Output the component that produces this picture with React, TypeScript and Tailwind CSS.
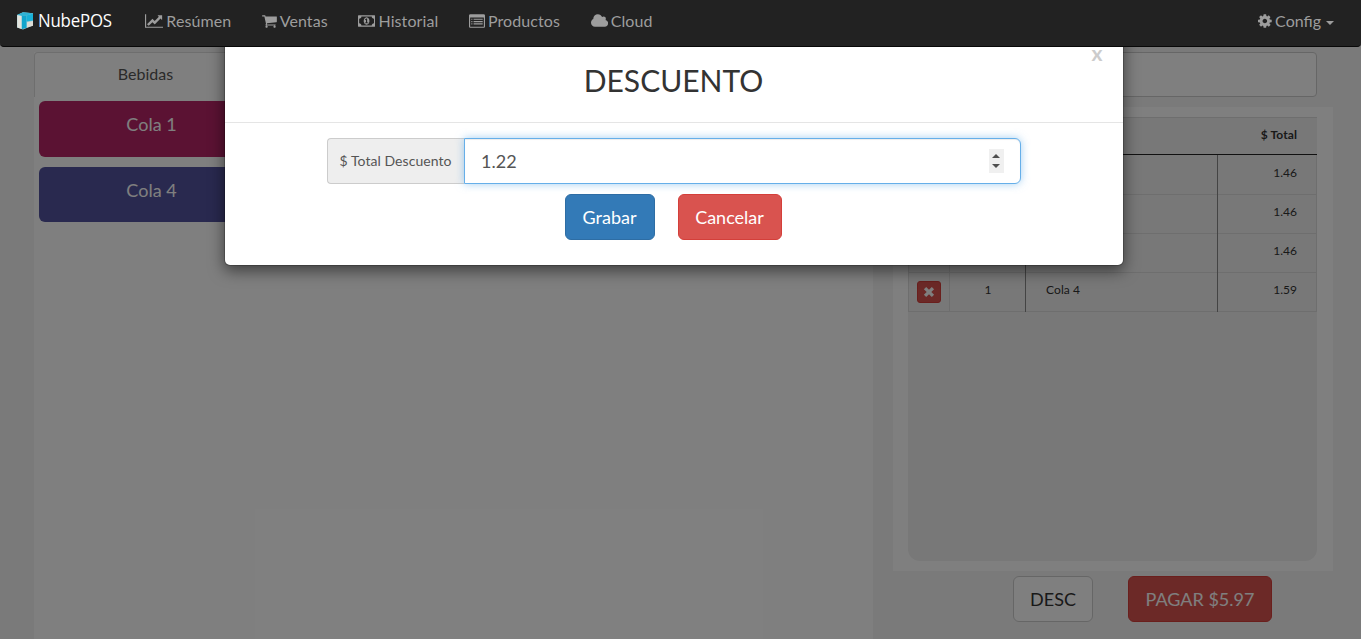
import React from "react";

type IconProps = { w: number; children: React.ReactNode };

const Icon = ({ w, children }: IconProps) => (
  <svg viewBox={`0 0 ${w} 1792`} width={(w * 16) / 1792} height={16} fill="currentColor" className="shrink-0">
    {children}
  </svg>
);

const ChartIcon = () => (
  <Icon w={2048}>
    <path d="M2048 1536v128h-2048v-1536h128v1408h1920zm-128-1248v435q0 21-19.5 29.5t-35.5-7.5l-121-121-633 633q-10 10-23 10t-23-10l-233-233-416 416-192-192 585-585q10-10 23-10t23 10l233 233 464-464-121-121q-16-16-7.5-35.5t29.5-19.5h435q14 0 23 9t9 23z" />
  </Icon>
);

const CartIcon = () => (
  <Icon w={1664}>
    <path transform="translate(-64 0)" d="M704 1536q0 52-38 90t-90 38-90-38-38-90 38-90 90-38 90 38 38 90zm896 0q0 52-38 90t-90 38-90-38-38-90 38-90 90-38 90 38 38 90zm128-1088v512q0 24-16.5 42.5t-40.5 21.5l-1044 122q13 60 13 70 0 16-24 64h920q26 0 45 19t19 45-19 45-45 19h-1024q-26 0-45-19t-19-45q0-11 8-31.5t16-36 21.5-40 15.5-29.5l-177-823h-204q-26 0-45-19t-19-45 19-45 45-19h256q16 0 28.5 6.5t19.5 15.5 13 24.5 8 26 5.5 29.5 4.5 26h1201q26 0 45 19t19 45z" />
  </Icon>
);

const MoneyIcon = () => (
  <Icon w={1920}>
    <path d="M768 1152h384v-96h-128v-448h-114l-148 137 77 80q42-37 55-57h2v288h-128v96zm512-256q0 70-21 142t-59.5 134-101.5 101-138 39-138-39-101.5-101-59.5-134-21-142 21-142 59.5-134 101.5-101 138-39 138 39 101.5 101 59.5 134 21 142zm512 256v-512q-106 0-181-75t-75-181h-1152q0 106-75 181t-181 75v512q106 0 181 75t75 181h1152q0-106 75-181t181-75zm128-832v1152q0 26-19 45t-45 19h-1792q-26 0-45-19t-19-45v-1152q0-26 19-45t45-19h1792q26 0 45 19t19 45z" />
  </Icon>
);

const ListIcon = () => (
  <Icon w={1792}>
    <path
      fillRule="evenodd"
      d="M160 128h1472q66 0 113 47t47 113v1216q0 66-47 113t-113 47h-1472q-66 0-113-47t-47-113v-1216q0-66 47-113t113-47zM160 512q-32 0-32 32v960q0 32 32 32h1472q32 0 32-32v-960q0-32-32-32z"
    />
    <path d="M256 640h128v128h-128zM512 640h1024v128h-1024zM256 896h128v128h-128zM512 896h1024v128h-1024zM256 1152h128v128h-128zM512 1152h1024v128h-1024z" />
  </Icon>
);

const CloudIcon = () => (
  <Icon w={1920}>
    <path d="M1920 1152q0 159-112.5 271.5t-271.5 112.5h-1088q-185 0-316.5-131.5t-131.5-316.5q0-132 71-241.5t187-163.5q-2-28-2-43 0-212 150-362t362-150q158 0 286.5 88t187.5 230q70-62 166-62 106 0 181 75t75 181q0 75-41 138 129 30 213 134.5t84 239.5z" />
  </Icon>
);

const GearIcon = () => (
  <Icon w={1536}>
    <path transform="translate(-128 0)" d="M1152 896q0-106-75-181t-181-75-181 75-75 181 75 181 181 75 181-75 75-181zm512-109v222q0 12-8 23t-20 13l-185 28q-19 54-39 91 35 50 107 138 10 12 10 25t-9 23q-27 37-99 108t-94 71q-12 0-26-9l-138-108q-44 23-91 38-16 136-29 186-7 28-36 28h-222q-14 0-24.5-8.5t-11.5-21.5l-28-184q-49-16-90-37l-141 107q-10 9-25 9-14 0-25-11-126-114-165-168-7-10-7-23 0-12 8-23 15-21 51-66.5t54-70.5q-27-50-41-99l-183-27q-13-2-21-12.5t-8-23.5v-222q0-12 8-23t19-13l186-28q14-46 39-92-40-57-107-138-10-12-10-24 0-10 9-23 26-36 98.5-107.5t94.5-71.5q13 0 26 10l138 107q44-23 91-38 16-136 29-186 7-28 36-28h222q14 0 24.5 8.5t11.5 21.5l28 184q49 16 90 37l142-107q9-9 24-9 13 0 25 10 129 119 165 170 7 8 7 22 0 12-8 23-15 21-51 66.5t-54 70.5q26 50 41 98l183 28q13 2 21 12.5t8 23.5z" />
  </Icon>
);

const CubeLogo = () => (
  <svg width="17" height="18" viewBox="0 0 17 18" className="shrink-0">
    <path d="M0 3L6 0.3L16 1.2V13.5L6 17.5L0 15.5Z" fill="#9ccbd6" />
    <path d="M0 3L6 0.3L16 1.2L10 3.6L5 4Z" fill="#2fb3d4" />
    <path d="M0.3 3.2L4.8 4V17L0.3 15.5Z" fill="#e4e4dd" />
    <path d="M4.8 4L9.5 3.5V15.8L4.8 17.2Z" fill="#12a5cc" />
    <path d="M9.5 3.5L16 1.5V8.5L9.5 9.6Z" fill="#18b1d8" />
    <path d="M10 10.2L16 9V13.8L10 15.6Z" fill="#dcdcd5" />
  </svg>
);

const NAV = [
  { label: "Resúmen", icon: <ChartIcon /> },
  { label: "Ventas", icon: <CartIcon /> },
  { label: "Historial", icon: <MoneyIcon /> },
  { label: "Productos", icon: <ListIcon /> },
  { label: "Cloud", icon: <CloudIcon /> },
];

const ROWS = [
  { qty: 1, name: "Cola 1", total: "1.46" },
  { qty: 1, name: "Cola 1", total: "1.46" },
  { qty: 1, name: "Cola 1", total: "1.46" },
  { qty: 1, name: "Cola 4", total: "1.59" },
];

function Navbar() {
  return (
    <header className="relative z-20 flex h-[47px] items-start rounded-b border-b border-[#080808] bg-[#222] pl-[17px] pr-[27px] text-[#9d9d9d]">
      <div className="mt-3 flex w-[98px] items-start gap-1">
        <CubeLogo />
        <span className="-mt-[4px] origin-left scale-x-[0.935] font-['Open_Sans',sans-serif] text-[18px] leading-[25px] tracking-[-0.2px] text-white">NubePOS</span>
      </div>
      <nav className="ml-[30px] flex gap-[30.5px] tracking-[0.1px]">
        {NAV.map((n) => (
          <a key={n.label} className="flex h-[42px] items-center gap-[3px]">
            {n.icon}
            <span className="-mt-px">{n.label}</span>
          </a>
        ))}
      </nav>
      <a className="ml-auto flex h-[42px] items-center gap-[3px]">
        <GearIcon />
        <span className="-mt-px">Config</span>
        <span className="ml-[2px] mt-1 border-x-4 border-t-4 border-x-transparent border-t-[#9d9d9d]" />
      </a>
    </header>
  );
}

function Catalog() {
  return (
    <section className="ml-[34px] mt-[5px] w-[839px] bg-white">
      <div className="flex h-[45px] w-[223px] items-center justify-center rounded-t border border-b-0 border-[#ddd] pb-[2px] text-[#555]">
        Bebidas
      </div>
      <div className="flex flex-col gap-[10px] px-[5px] pt-1 text-lg text-white">
        <div className="h-[56px] w-[225px] rounded-md bg-[#b62466] pt-[9px] text-center">Cola 1</div>
        <div className="h-[55px] w-[225px] rounded-md bg-[#52529e] pt-[9px] text-center">Cola 4</div>
      </div>
    </section>
  );
}

function Ticket() {
  return (
    <section className="ml-5 mt-[5px] w-[440px]">
      <div className="ml-[15px] h-[45px] w-[409px] rounded border border-[#ccc] bg-white" />
      <div className="mt-[10px] h-[464px] bg-white pl-[15px] pr-4 pt-[10px]">
        <div className="h-[444px] overflow-hidden rounded-b-xl bg-[#f0f0f0] text-xs text-[#333]">
          <div className="flex h-[38px] items-center justify-end border-b border-t border-b-[#222] border-t-[#ddd] pb-[2px] pr-5 font-bold tracking-[0.1px]">
            $ Total
          </div>
          {ROWS.map((r, i) => (
            <div key={i} className={i === 0 ? "flex h-10 border-b border-r border-[#ddd] leading-[18px]" : "flex h-[39px] border-b border-r border-[#ddd] leading-4"}>
              <div className="flex w-[42px] items-center justify-center border-x border-[#ddd]">
                <span className="flex h-[22px] w-6 items-center justify-center rounded-[3px] border border-[#d43f3a] bg-[#d9534f] text-white">
                  <svg width="12" height="12" viewBox="0 0 12 12">
                    <path d="M3.2 .9L6 3.7L8.8 .9L11.1 3.2L8.3 6L11.1 8.8L8.8 11.1L6 8.3L3.2 11.1L.9 8.8L3.7 6L.9 3.2Z" fill="currentColor" />
                  </svg>
                </span>
              </div>
              <div className="-mb-px w-[76px] border-r border-[#888] pl-px pt-[9px] text-center">{r.qty}</div>
              <div className="-mb-px w-[192px] border-r border-[#888] pl-5 pt-[9px] tracking-[0.1px]">{r.name}</div>
              <div className="flex-1 pr-[19px] pt-[9px] text-right">{r.total}</div>
            </div>
          ))}
        </div>
      </div>
      <div className="mt-[5px] flex gap-[35px] pl-[120px] text-lg">
        <button className="h-[46px] w-[80px] rounded-md border border-[#ccc] bg-white text-[#333]">DESC</button>
        <button className="h-[46px] w-[144px] rounded-md border border-[#d43f3a] bg-[#d9534f] text-white">PAGAR $5.97</button>
      </div>
    </section>
  );
}

function DiscountDialog() {
  return (
    <div className="absolute left-[224px] top-[30px] z-10 h-[236px] w-[900px] rounded-md border border-black/20 bg-white bg-clip-padding shadow-[0_5px_15px_rgba(0,0,0,0.5)]">
      <span className="absolute right-[20.5px] top-[11px] text-[21px] font-bold leading-[21px] text-[#ccc]">x</span>
      <div className="flex h-[92px] items-end justify-center border-b border-[#e5e5e5] pb-[24px] pr-px">
        <h4 className="text-[30px] leading-[36px] text-[#333]">DESCUENTO</h4>
      </div>
      <div className="flex justify-center pt-[15px]">
        <label className="flex h-[46px] w-[137px] items-center rounded-l border border-r-0 border-[#ccc] bg-[#eee] pl-[11.5px] text-sm tracking-[0.06px] text-[#555]">
          $ Total Descuento
        </label>
        <div className="flex h-[46px] w-[557px] items-center justify-between rounded-r-md border border-[#66afe9] bg-white pl-4 pr-4 text-lg text-[#555] shadow-[inset_0_1px_1px_rgba(0,0,0,0.075),0_0_8px_rgba(102,175,233,0.6)]">
          <span>1.22</span>
          <span className="flex h-6 w-[15px] flex-col items-start justify-between bg-[#f0f0f0] py-[5px] pl-[3px]">
            <span className="border-x-4 border-b-4 border-x-transparent border-b-[#505050]" />
            <span className="border-x-4 border-t-4 border-x-transparent border-t-[#505050]" />
          </span>
        </div>
      </div>
      <div className="mt-[10px] flex justify-center gap-[23px] pr-[2px] text-lg text-white">
        <button className="h-[46px] w-[90px] rounded-md border border-[#2e6da4] bg-[#337ab7]">Grabar</button>
        <button className="h-[46px] w-[104px] rounded-md border border-[#d43f3a] bg-[#d9534f]">Cancelar</button>
      </div>
    </div>
  );
}

export default function App() {
  return (
    <div className="relative flex h-[639px] w-[1361px] flex-col overflow-hidden bg-[#f5f5f5] font-['Lato',sans-serif] text-base">
      <Navbar />
      <main className="flex flex-1">
        <Catalog />
        <Ticket />
      </main>
      <div className="absolute inset-0 bg-black/50" />
      <DiscountDialog />
    </div>
  );
}
